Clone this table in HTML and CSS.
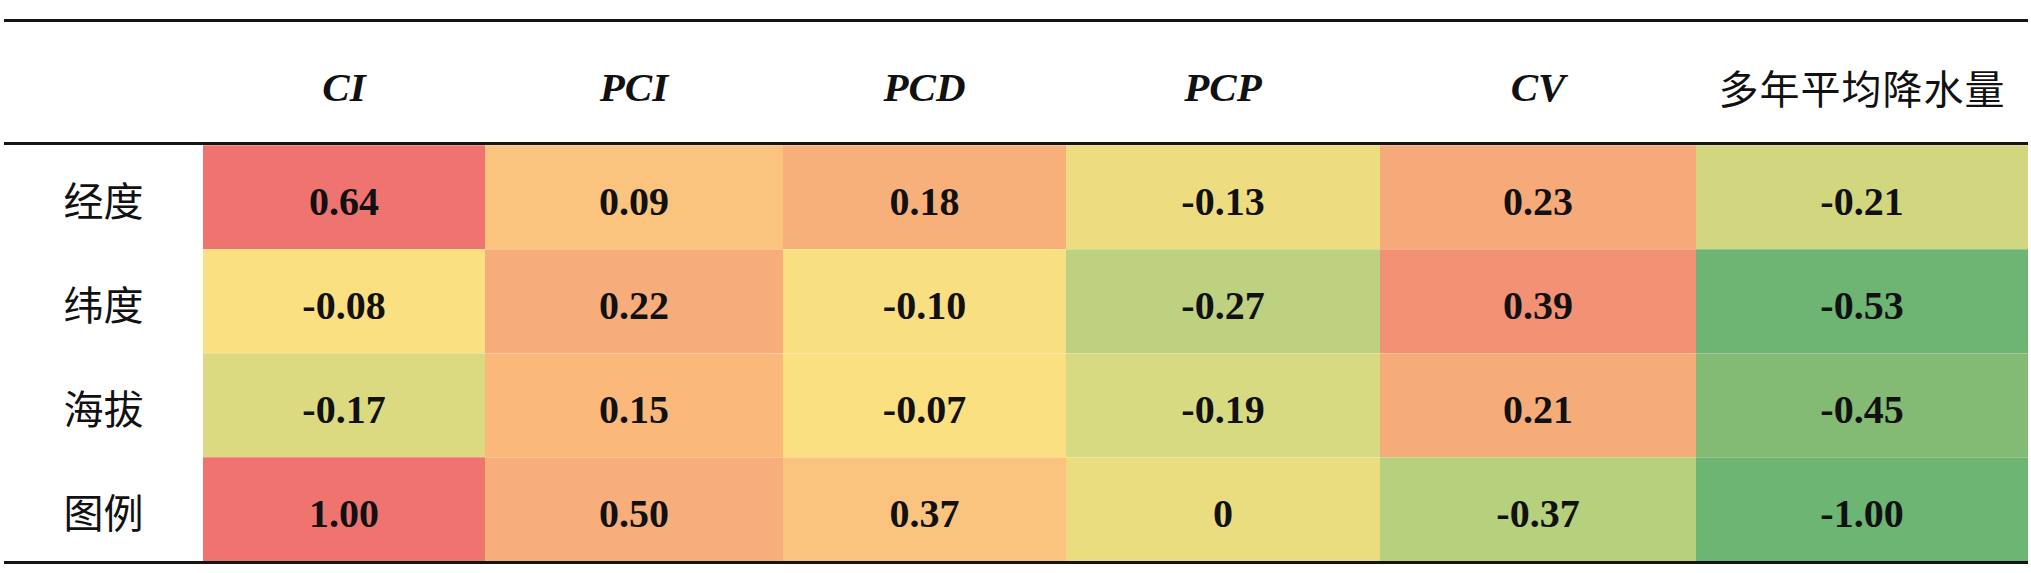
FILE: index.html
```html
<!DOCTYPE html>
<html lang="zh">
<head>
<meta charset="utf-8">
<title>相关性热力表</title>
<link rel="stylesheet" href="styles.css">
</head>
<body>
<div class="table">
  <div class="th"></div>
  <div class="th en">CI</div>
  <div class="th en">PCI</div>
  <div class="th en">PCD</div>
  <div class="th en">PCP</div>
  <div class="th en">CV</div>
  <div class="th zh">多年平均降水量</div>

  <div class="label">经度</div>
  <div class="cell" style="background:#EF7470">0.64</div>
  <div class="cell" style="background:#FAC47E">0.09</div>
  <div class="cell" style="background:#F8B07B">0.18</div>
  <div class="cell" style="background:#EDDD80">-0.13</div>
  <div class="cell" style="background:#F6AA79">0.23</div>
  <div class="cell" style="background:#D1D67F">-0.21</div>

  <div class="label">纬度</div>
  <div class="cell" style="background:#FAE080">-0.08</div>
  <div class="cell" style="background:#F7AD7A">0.22</div>
  <div class="cell" style="background:#F8DF82">-0.10</div>
  <div class="cell" style="background:#BED180">-0.27</div>
  <div class="cell" style="background:#F29173">0.39</div>
  <div class="cell" style="background:#6EB574">-0.53</div>

  <div class="label">海拔</div>
  <div class="cell" style="background:#DCDA80">-0.17</div>
  <div class="cell" style="background:#FAB97B">0.15</div>
  <div class="cell" style="background:#FBE082">-0.07</div>
  <div class="cell" style="background:#D8DA82">-0.19</div>
  <div class="cell" style="background:#F6AC79">0.21</div>
  <div class="cell" style="background:#84BB74">-0.45</div>

  <div class="label">图例</div>
  <div class="cell" style="background:#EF7470">1.00</div>
  <div class="cell" style="background:#F7AE7A">0.50</div>
  <div class="cell" style="background:#FAC47E">0.37</div>
  <div class="cell" style="background:#E9DD80">0</div>
  <div class="cell" style="background:#B7D07E">-0.37</div>
  <div class="cell" style="background:#6CB573">-1.00</div>
</div>
</body>
</html>
```

FILE: styles.css
```css
html, body {
  margin: 0;
  padding: 0;
  background: #ffffff;
}

body {
  font-family: "Liberation Serif", "Noto Sans CJK SC", serif;
  color: #111111;
}

.table {
  display: grid;
  grid-template-columns: 199px 282px 298px 283px 314px 316px 332px;
  width: 2024px;
  margin: 19px 0 0 4px;
  border-top: 3px solid #151515;
  border-bottom: 3px solid #151515;
}

.th {
  height: 120px;
  border-bottom: 3px solid #151515;
  display: flex;
  align-items: center;
  justify-content: center;
  padding-top: 10px;
  box-sizing: content-box;
  height: 110px;
}

.th.en {
  font-family: "Liberation Serif", serif;
  font-style: italic;
  font-weight: bold;
  font-size: 41px;
}

.th.zh {
  font-family: "Noto Sans CJK SC", sans-serif;
  font-weight: 400;
  font-size: 40px;
  letter-spacing: 1px;
}

.label {
  height: 104px;
  box-sizing: border-box;
  padding-top: 4px;
  display: flex;
  align-items: center;
  justify-content: center;
  font-family: "Noto Sans CJK SC", sans-serif;
  font-size: 40px;
  font-weight: 400;
}

.cell {
  height: 104px;
  box-sizing: border-box;
  padding-top: 8px;
  display: flex;
  align-items: center;
  justify-content: center;
  font-family: "Liberation Serif", serif;
  font-weight: bold;
  font-size: 40px;
  box-shadow: inset 0 1px 0 rgba(255, 255, 255, 0.25);
}
```
